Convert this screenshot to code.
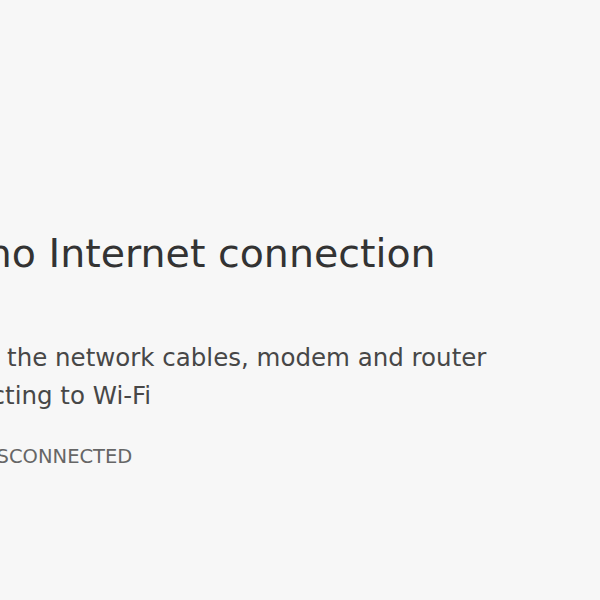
export default function App() {
  return (
    <div
      className="h-[600px] w-[600px] overflow-hidden bg-[#f7f7f7]"
      style={{ fontFamily: '"DejaVu Sans", sans-serif' }}
    >
      <div className="ml-[-183px] pt-[229px] whitespace-nowrap">
        <h1 className="text-[39.5px] leading-[49px] font-normal text-[#333333]">
          There is no Internet connection
        </h1>
        <div className="mt-[23px] text-[24.5px] leading-[38px] text-[#474747]">
          <p>Try:</p>
          <ul className="pl-[69px]">
            <li>Checking the network cables, modem and router</li>
            <li>Reconnecting to Wi-Fi</li>
          </ul>
        </div>
        <div className="ml-[3px] mt-[29.5px] text-[19.5px] leading-[24px] text-[#666666]">
          ERR_INTERNET_DISCONNECTED
        </div>
      </div>
    </div>
  );
}
